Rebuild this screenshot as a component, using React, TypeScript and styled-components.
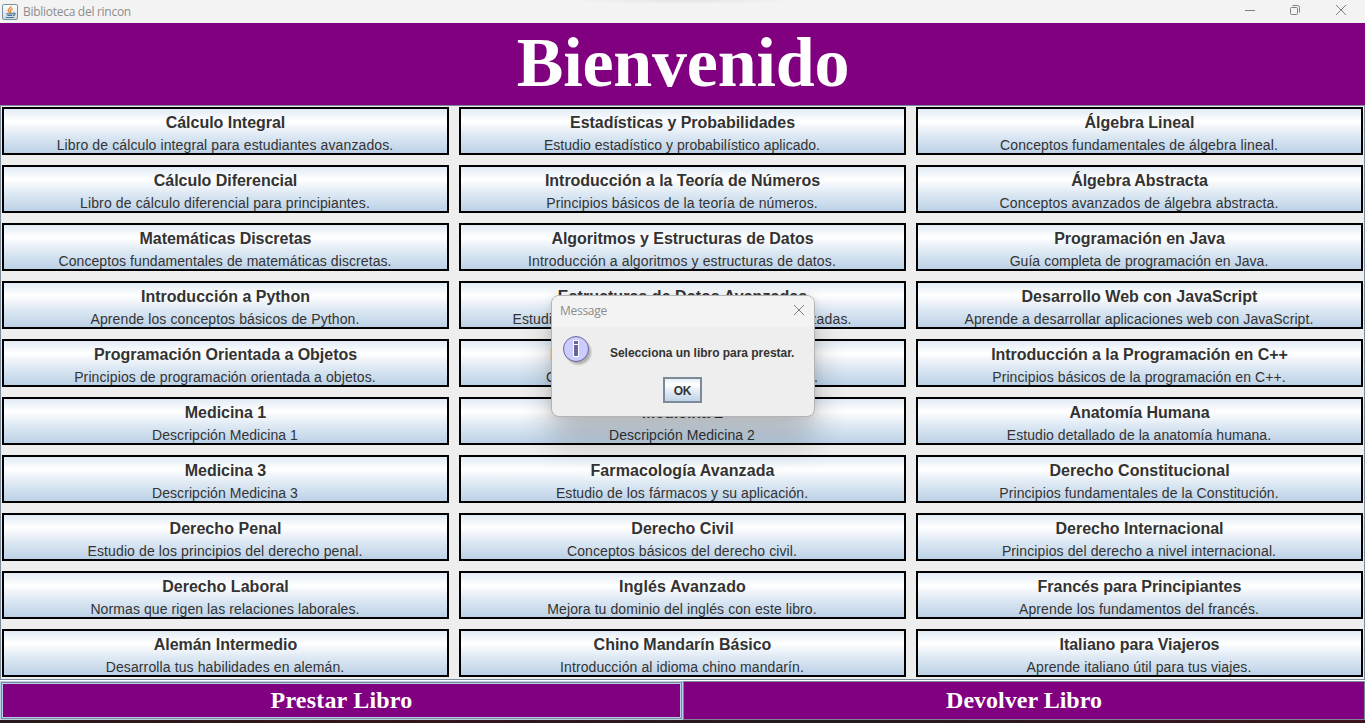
import React from "react";
import styled, { createGlobalStyle } from "styled-components";

const Global = createGlobalStyle`
  *{box-sizing:border-box}
  body{margin:0;overflow:hidden;background:#eee}
`;
const Window = styled.div`
  position:relative;width:1365px;height:723px;display:flex;flex-direction:column;
  background:#eee;font-family:"Liberation Sans",Arial,sans-serif;overflow:hidden;
`;
const TitleBar = styled.header`
  height:23px;flex:none;display:flex;align-items:center;background:#f3f3f3;padding-left:2px;
  background-image:radial-gradient(ellipse 118px 4px at 684px 0,#e4e4e4,#f3f3f3);
`;
const WindowTitle = styled.span`
  flex:1;margin-left:5px;font:12px/16px "Open Sans","Noto Sans",sans-serif;color:#8c8c8c;
  letter-spacing:-.28px;white-space:nowrap;
`;
const Controls = styled.div`display:flex;gap:35px;padding-right:18px;margin-top:-3px;`;
const Banner = styled.h1`
  margin:0;height:82px;flex:none;background:#800080;color:#fff;text-align:center;
  font:bold 70px/79px "Liberation Serif","Times New Roman",serif;letter-spacing:-.2px;padding-left:1px;
`;
const Shelf = styled.main`
  height:575px;flex:none;border:1px solid #7a8a99;padding:1px;display:grid;
  grid-template-columns:repeat(3,447px);grid-auto-rows:48px;gap:10px;
`;
const metal = "linear-gradient(#dde8f3 0%,#fff 30%,#dde8f3 60%,#b8cfe5 100%) border-box";
const Book = styled.button`
  border:2px solid #000;border-radius:0;padding:4px 1px 0 0;margin:0;overflow:hidden;display:flex;flex-direction:column;
  align-items:center;justify-content:flex-start;color:#333;font-family:inherit;
  background:${metal};
`;
const Name = styled.span<{ $ls: number }>`
  flex:none;padding-left:1px;font-size:16px;font-weight:bold;line-height:20px;height:21px;white-space:nowrap;letter-spacing:${p => p.$ls}px;
`;
const Summary = styled.span<{ $ls: number }>`
  flex:none;font-size:14px;line-height:22px;white-space:nowrap;letter-spacing:${p => p.$ls}px;
`;
const Actions = styled.footer`
  height:43px;flex:none;display:grid;grid-template-columns:683px 682px;grid-template-rows:39px;border-top:1px solid #fff;
  background:linear-gradient(90deg,#2a1a1c,#35151c 30%,#241c20 60%,#3a141c);
`;
const Action = styled.button<{ $focused?: boolean }>`
  margin:0;padding:0 0 2px;border-radius:0;background:#800080;color:#fff;
  font:bold 24px/32px "Liberation Serif","Times New Roman",serif;letter-spacing:${p => (p.$focused ? 0.2 : 0)}px;
  border:1px solid ${p => (p.$focused ? "#b8cfe5" : "#7a8a99")};
  box-shadow:${p => (p.$focused ? "inset 0 0 0 1px #7a8a99, inset 0 0 0 2px #b8cfe5" : "none")};
`;
const Dialog = styled.section`
  position:absolute;left:551px;top:295px;width:264px;height:122px;border:1px solid #b3b3b3;border-radius:8px;
  background:#eee;box-shadow:0 23px 32px rgba(0,0,0,.22),0 0 10px rgba(0,0,0,.1);
`;
const DialogBar = styled.div`
  height:31px;display:flex;align-items:center;padding:0 9px 2px 3px;background:#f3f3f3;border-radius:7px 7px 0 0;
  svg{margin-bottom:2px}
`;
const DialogBody = styled.div`display:flex;height:50px;padding:8px 0 0 10px;`;
const Message = styled.span`
  margin:10px 0 0 16px;font-size:12px;line-height:16px;font-weight:bold;color:#333;white-space:nowrap;letter-spacing:-.03px;
`;
const Confirm = styled.button`
  display:block;margin:0 0 0 111px;width:39px;height:26px;border:2px solid #7a8a99;border-radius:0;padding:1px 0 0;
  font:bold 12px/14px "Liberation Sans",Arial,sans-serif;color:#333;letter-spacing:-.3px;
  background:${metal};
`;

type Entry = { name: string; summary: string; nameSpacing?: number; spacing: number };
const books: Entry[] = [
  { name: "Cálculo Integral", summary: "Libro de cálculo integral para estudiantes avanzados.", spacing: 0.11 },
  { name: "Estadísticas y Probabilidades", summary: "Estudio estadístico y probabilístico aplicado.", spacing: 0.03 },
  { name: "Álgebra Lineal", summary: "Conceptos fundamentales de álgebra lineal.", spacing: 0.11 },
  { name: "Cálculo Diferencial", summary: "Libro de cálculo diferencial para principiantes.", spacing: 0.12 },
  { name: "Introducción a la Teoría de Números", summary: "Principios básicos de la teoría de números.", spacing: 0.09 },
  { name: "Álgebra Abstracta", summary: "Conceptos avanzados de álgebra abstracta.", spacing: 0.12 },
  { name: "Matemáticas Discretas", summary: "Conceptos fundamentales de matemáticas discretas.", spacing: 0.08 },
  { name: "Algoritmos y Estructuras de Datos", summary: "Introducción a algoritmos y estructuras de datos.", spacing: 0.12 },
  { name: "Programación en Java", summary: "Guía completa de programación en Java.", nameSpacing: 0, spacing: 0.05 },
  { name: "Introducción a Python", summary: "Aprende los conceptos básicos de Python.", nameSpacing: 0, spacing: 0.11 },
  { name: "Estructuras de Datos Avanzadas", summary: "Estudio profundo de estructuras de datos avanzadas.", nameSpacing: 0.05, spacing: 0.15 },
  { name: "Desarrollo Web con JavaScript", summary: "Aprende a desarrollar aplicaciones web con JavaScript.", nameSpacing: 0.02, spacing: 0.075 },
  { name: "Programación Orientada a Objetos", summary: "Principios de programación orientada a objetos.", spacing: 0.11 },
  { name: "Introducción a las Bases de Datos", summary: "Conceptos de bases de datos relacionales.", nameSpacing: 0.13, spacing: 0.1 },
  { name: "Introducción a la Programación en C++", summary: "Principios básicos de la programación en C++.", spacing: 0.09 },
  { name: "Medicina 1", summary: "Descripción Medicina 1", spacing: 0.05 },
  { name: "Medicina 2", summary: "Descripción Medicina 2", spacing: 0.05 },
  { name: "Anatomía Humana", summary: "Estudio detallado de la anatomía humana.", spacing: 0.05 },
  { name: "Medicina 3", summary: "Descripción Medicina 3", spacing: 0.05 },
  { name: "Farmacología Avanzada", summary: "Estudio de los fármacos y su aplicación.", nameSpacing: 0.1, spacing: 0.08 },
  { name: "Derecho Constitucional", summary: "Principios fundamentales de la Constitución.", nameSpacing: 0.03, spacing: 0.09 },
  { name: "Derecho Penal", summary: "Estudio de los principios del derecho penal.", nameSpacing: 0.06, spacing: 0.11 },
  { name: "Derecho Civil", summary: "Conceptos básicos del derecho civil.", nameSpacing: 0, spacing: 0.1 },
  { name: "Derecho Internacional", summary: "Principios del derecho a nivel internacional.", nameSpacing: 0, spacing: 0.11 },
  { name: "Derecho Laboral", summary: "Normas que rigen las relaciones laborales.", nameSpacing: 0.03, spacing: 0.09 },
  { name: "Inglés Avanzado", summary: "Mejora tu dominio del inglés con este libro.", nameSpacing: 0.12, spacing: 0.09 },
  { name: "Francés para Principiantes", summary: "Aprende los fundamentos del francés.", spacing: 0.12 },
  { name: "Alemán Intermedio", summary: "Desarrolla tus habilidades en alemán.", spacing: 0.12 },
  { name: "Chino Mandarín Básico", summary: "Introducción al idioma chino mandarín.", nameSpacing: 0, spacing: 0.09 },
  { name: "Italiano para Viajeros", summary: "Aprende italiano útil para tus viajes.", spacing: 0.1 },
];

const JavaIcon = () => (
  <svg width="16" height="16" viewBox="0 0 16 16" fill="none">
    <defs>
      <linearGradient id="tile" x1="0" y1="0" x2="0" y2="1">
        <stop offset="0" stopColor="#fff" /><stop offset="1" stopColor="#cbd8e2" />
      </linearGradient>
    </defs>
    <rect x=".5" y=".5" width="15" height="15" rx="1.5" fill="url(#tile)" stroke="#7890a3" />
    <path d="M9 2C9.800 4 5.600 4.500 6.200 6.500C6.400 7.400 7.500 7.600 7.700 8.900M10.700 4.600C8.700 5.400 7.900 6.200 8.700 7.200C9.100 7.800 8.900 8.300 8.500 8.900" stroke="#e8832b" strokeWidth="1.300" />
    <path d="M4.300 9.800H11M5.300 11.500H10.300M3.800 13.500H12M11 9.300C14 8.500 13.500 11.200 11 11.600" stroke="#4b7391" strokeWidth="1.200" />
  </svg>
);
const Close = () => (
  <svg width="12" height="12" viewBox="0 0 12 12" stroke="#808080" fill="none"><path d="M1 1L11 11M11 1L1 11" /></svg>
);
const InfoIcon = () => (
  <svg width="32" height="32" viewBox="0 0 32 32">
    <defs><filter id="soft" x="-20%" y="-20%" width="150%" height="150%"><feGaussianBlur stdDeviation="1.300" /></filter></defs>
    <circle cx="16.500" cy="17" r="12.500" fill="#999" opacity=".75" filter="url(#soft)" />
    <circle cx="14" cy="14" r="12.500" fill="#ccf" stroke="#669" />
    <path d="M11 5H17V22H11Z" fill="#fff" />
    <path d="M12 6H16V9H12ZM12 10H16V21H12Z" fill="#669" />
  </svg>
);

export default function App() {
  return (
    <Window>
      <Global />
      <TitleBar>
        <JavaIcon />
        <WindowTitle>Biblioteca del rincon</WindowTitle>
        <Controls>
          <svg width="10" height="12" stroke="#808080"><path d="M0 6.500H10" /></svg>
          <svg width="10" height="12" stroke="#808080" fill="none">
            <rect x=".5" y="3.500" width="7" height="7" rx="1" /><path d="M2.500 1.500H7.500Q9.500 1.500 9.500 3.500V8.500" />
          </svg>
          <Close />
        </Controls>
      </TitleBar>
      <Banner>Bienvenido</Banner>
      <Shelf>
        {books.map(book => (
          <Book key={book.name}>
            <Name $ls={book.nameSpacing ?? -0.03}>{book.name}</Name>
            <Summary $ls={book.spacing}>{book.summary}</Summary>
          </Book>
        ))}
      </Shelf>
      <Actions>
        <Action $focused>Prestar Libro</Action>
        <Action>Devolver Libro</Action>
      </Actions>
      <Dialog>
        <DialogBar><WindowTitle>Message</WindowTitle><Close /></DialogBar>
        <DialogBody><InfoIcon /><Message>Selecciona un libro para prestar.</Message></DialogBody>
        <Confirm>OK</Confirm>
      </Dialog>
    </Window>
  );
}
